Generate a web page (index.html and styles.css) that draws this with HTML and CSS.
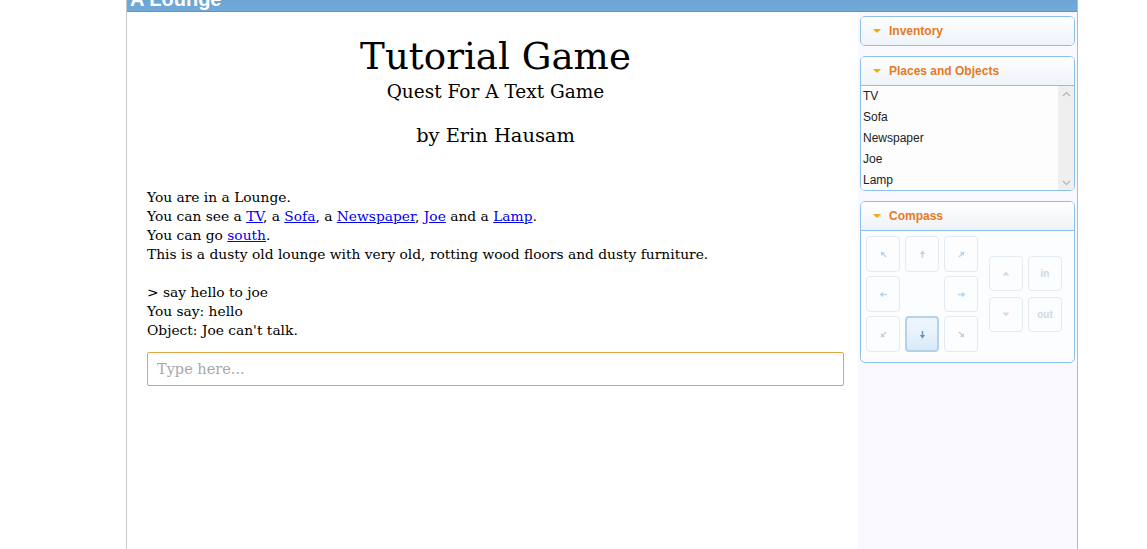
FILE: index.html
```html
<!DOCTYPE html>
<html lang="en">
<head>
  <meta charset="UTF-8" />
  <title>Tutorial Game</title>
  <link rel="stylesheet" href="styles.css">
</head>
<body>
  <div class="frame">
    <div class="locbar">A Lounge</div>
    <div class="layout">
      <div class="main">
        <div class="titles">
          <div class="game-title">Tutorial Game</div>
          <div class="subtitle">Quest For A Text Game</div>
          <div class="author">by Erin Hausam</div>
        </div>
        <div class="output">
          You are in a Lounge.<br>
          You can see a <a href="#">TV</a>, a <a href="#">Sofa</a>, a <a href="#">Newspaper</a>, <a href="#">Joe</a> and a <a href="#">Lamp</a>.<br>
          You can go <a href="#">south</a>.<br>
          This is a dusty old lounge with very old, rotting wood floors and dusty furniture.<br>
          <br>
          &gt; say hello to joe<br>
          You say: hello<br>
          Object: Joe can't talk.
        </div>
        <input class="cmd" type="text" placeholder="Type here...">
      </div>

      <div class="side">
        <div class="panel">
          <div class="panel-head"><span class="tri"></span>Inventory</div>
        </div>

        <div class="panel">
          <div class="panel-head head-line"><span class="tri"></span>Places and Objects</div>
          <div class="objlist">
            <ul>
              <li>TV</li>
              <li>Sofa</li>
              <li>Newspaper</li>
              <li>Joe</li>
              <li>Lamp</li>
            </ul>
            <div class="sbar">
              <svg width="9" height="6" viewBox="0 0 9 6"><path d="M1 5 L4.5 1.5 L8 5" fill="none" stroke="#b8b8b8" stroke-width="1.3"/></svg>
              <svg width="9" height="6" viewBox="0 0 9 6"><path d="M1 1 L4.5 4.5 L8 1" fill="none" stroke="#b8b8b8" stroke-width="1.3"/></svg>
            </div>
          </div>
        </div>

        <div class="panel">
          <div class="panel-head head-line"><span class="tri"></span>Compass</div>
          <div class="compass">
            <div class="dirs">
              <button class="cbtn"><svg class="arrow r-45" viewBox="0 0 10 10"><path d="M5 2 V9" /><polygon points="5,0.5 2,4.5 8,4.5" /></svg></button>
              <button class="cbtn"><svg class="arrow" viewBox="0 0 10 10"><path d="M5 2 V9" /><polygon points="5,0.5 2,4.5 8,4.5" /></svg></button>
              <button class="cbtn"><svg class="arrow r45" viewBox="0 0 10 10"><path d="M5 2 V9" /><polygon points="5,0.5 2,4.5 8,4.5" /></svg></button>
              <button class="cbtn"><svg class="arrow r-90" viewBox="0 0 10 10"><path d="M5 2 V9" /><polygon points="5,0.5 2,4.5 8,4.5" /></svg></button>
              <span></span>
              <button class="cbtn"><svg class="arrow r90" viewBox="0 0 10 10"><path d="M5 2 V9" /><polygon points="5,0.5 2,4.5 8,4.5" /></svg></button>
              <button class="cbtn"><svg class="arrow r-135" viewBox="0 0 10 10"><path d="M5 2 V9" /><polygon points="5,0.5 2,4.5 8,4.5" /></svg></button>
              <button class="cbtn on"><svg class="arrow r180" viewBox="0 0 10 10"><path d="M5 2 V9" /><polygon points="5,0.5 2,4.5 8,4.5" /></svg></button>
              <button class="cbtn"><svg class="arrow r135" viewBox="0 0 10 10"><path d="M5 2 V9" /><polygon points="5,0.5 2,4.5 8,4.5" /></svg></button>
            </div>
            <div class="updown">
              <button class="cbtn"><svg class="tri-ico" viewBox="0 0 8 5"><polygon points="4,0.5 0.5,4.5 7.5,4.5" /></svg></button>
              <button class="cbtn word">in</button>
              <button class="cbtn"><svg class="tri-ico" viewBox="0 0 8 5"><polygon points="0.5,0.5 7.5,0.5 4,4.5" /></svg></button>
              <button class="cbtn word">out</button>
            </div>
          </div>
        </div>
      </div>
    </div>
  </div>
</body>
</html>
```

FILE: styles.css
```css
html, body { margin:0; padding:0; background:#fff; overflow:hidden; }
body { font-family: "DejaVu Serif", Georgia, serif; font-size:13.8px; color:#000; }

.frame { margin-left:126px; width:950px; border-left:1px solid #c8c8c8; border-right:1px solid #b8b8b8; margin-top:-23px; height:572px; display:flex; flex-direction:column; }
.locbar { height:24px; padding-top:10px; padding-left:3px; color:#fff; font:bold 20px "Liberation Sans", Arial, sans-serif; line-height:24px; background:linear-gradient(#5f9ccf, #72aad8); border-bottom:1px solid #5a94c8; }

.layout { flex:1; display:flex; }
.main { flex:1; padding:0 14px 0 20px; }
.side { width:219px; background:#f8f8fe; padding:4px 2px 0 2px; box-sizing:border-box; }

.titles { text-align:center; padding-top:21px; }
.game-title { font-size:37.2px; line-height:47px; }
.subtitle { font-size:18.5px; line-height:24px; }
.author { font-size:19.4px; line-height:24px; margin-top:20px; }

.output { margin-top:40px; line-height:19px; }
.output a { color:#0000ee; }

.cmd { display:block; width:100%; box-sizing:border-box; height:34px; margin-top:12px; border:1px solid #e0a548; border-radius:2px; padding:0 9px; font-family:"DejaVu Serif", Georgia, serif; font-size:14.5px; outline:none; }
.cmd::placeholder { color:#a8a8a8; }

.panel { border:1px solid #8cc0e8; border-radius:5px; background:#fcfdff; margin-bottom:10px; overflow:hidden; }
.panel-head { height:28px; padding-left:12px; font:bold 12px "Liberation Sans", Arial, sans-serif; line-height:28px; color:#e8791c; background:linear-gradient(#ffffff, #eef3f8); }
.head-line { border-bottom:1px solid #8cc0e8; }
.tri { display:inline-block; width:0; height:0; border-left:4px solid transparent; border-right:4px solid transparent; border-top:4px solid #f2a90e; margin-right:8px; vertical-align:middle; position:relative; top:-1px; }

.objlist { display:flex; height:104px; background:#fdfdfd; }
.objlist ul { flex:1; list-style:none; margin:0; padding:0 0 0 2px; font:12px "Liberation Sans", Arial, sans-serif; color:#222; }
.objlist li { height:21px; line-height:21px; }
.sbar { width:16px; background:#efefef; display:flex; flex-direction:column; justify-content:space-between; align-items:center; padding:5px 0 4px; box-sizing:border-box; }

.compass { display:flex; align-items:center; padding:5px 0 10px 5px; }
.dirs { display:grid; grid-template-columns:repeat(3, 34px); grid-auto-rows:36px; column-gap:5px; row-gap:4px; }
.updown { display:grid; grid-template-columns:repeat(2, 34px); grid-auto-rows:35px; column-gap:5px; row-gap:6px; margin-left:11px; }
.cbtn { border:1px solid #e2eaf2; border-radius:4px; background:#fcfdfe; padding:0; margin:0; display:flex; align-items:center; justify-content:center; }
.cbtn.on { border:2px solid #b4d2ea; background:linear-gradient(#eef6fd 0%, #e7f2fc 50%, #d8eaf9 100%); }
.word { font:bold 10px "Liberation Sans", Arial, sans-serif; color:#cdd9e4; }

.arrow { width:9px; height:9px; }
.arrow path { stroke:#bcd4e6; stroke-width:1.6; fill:none; }
.arrow polygon { fill:#bcd4e6; }
.on .arrow path { stroke:#5b97c9; }
.on .arrow polygon { fill:#5b97c9; }
.r45 { transform:rotate(45deg); }
.r-45 { transform:rotate(-45deg); }
.r90 { transform:rotate(90deg); }
.r-90 { transform:rotate(-90deg); }
.r135 { transform:rotate(135deg); }
.r-135 { transform:rotate(-135deg); }
.r180 { transform:rotate(180deg); }
.tri-ico { width:8px; height:5px; fill:#cfdde9; }
```
